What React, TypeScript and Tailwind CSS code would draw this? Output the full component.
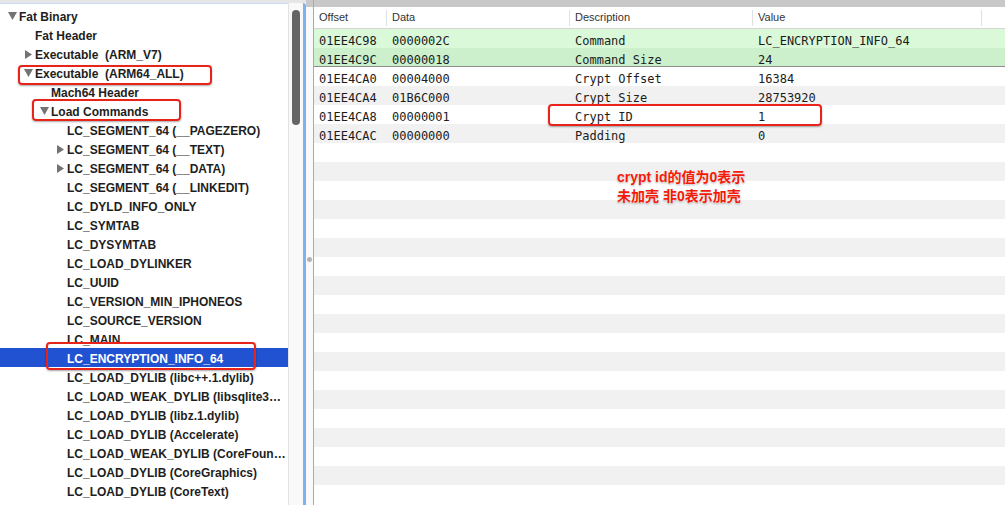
import React from "react";

type Node = { label: string; level: number; tri?: "open" | "closed"; selected?: boolean };

const tree: Node[] = [
  { label: "Fat Binary", level: 0, tri: "open" },
  { label: "Fat Header", level: 1 },
  { label: "Executable  (ARM_V7)", level: 1, tri: "closed" },
  { label: "Executable  (ARM64_ALL)", level: 1, tri: "open" },
  { label: "Mach64 Header", level: 2 },
  { label: "Load Commands", level: 2, tri: "open" },
  { label: "LC_SEGMENT_64 (__PAGEZERO)", level: 3 },
  { label: "LC_SEGMENT_64 (__TEXT)", level: 3, tri: "closed" },
  { label: "LC_SEGMENT_64 (__DATA)", level: 3, tri: "closed" },
  { label: "LC_SEGMENT_64 (__LINKEDIT)", level: 3 },
  { label: "LC_DYLD_INFO_ONLY", level: 3 },
  { label: "LC_SYMTAB", level: 3 },
  { label: "LC_DYSYMTAB", level: 3 },
  { label: "LC_LOAD_DYLINKER", level: 3 },
  { label: "LC_UUID", level: 3 },
  { label: "LC_VERSION_MIN_IPHONEOS", level: 3 },
  { label: "LC_SOURCE_VERSION", level: 3 },
  { label: "LC_MAIN", level: 3 },
  { label: "LC_ENCRYPTION_INFO_64", level: 3, selected: true },
  { label: "LC_LOAD_DYLIB (libc++.1.dylib)", level: 3 },
  { label: "LC_LOAD_WEAK_DYLIB (libsqlite3…", level: 3 },
  { label: "LC_LOAD_DYLIB (libz.1.dylib)", level: 3 },
  { label: "LC_LOAD_DYLIB (Accelerate)", level: 3 },
  { label: "LC_LOAD_WEAK_DYLIB (CoreFoun…", level: 3 },
  { label: "LC_LOAD_DYLIB (CoreGraphics)", level: 3 },
  { label: "LC_LOAD_DYLIB (CoreText)", level: 3 },
];

const rows = [
  ["01EE4C98", "0000002C", "Command", "LC_ENCRYPTION_INFO_64"],
  ["01EE4C9C", "00000018", "Command Size", "24"],
  ["01EE4CA0", "00004000", "Crypt Offset", "16384"],
  ["01EE4CA4", "01B6C000", "Crypt Size", "28753920"],
  ["01EE4CA8", "00000001", "Crypt ID", "1"],
  ["01EE4CAC", "00000000", "Padding", "0"],
];

const headers = ["Offset", "Data", "Description", "Value", ""];

const pad = ["pl-[5px]", "pl-[21px]", "pl-[37px]", "pl-[53px]"];

function Triangle({ kind }: { kind: "open" | "closed" }) {
  if (kind === "open")
    return (
      <svg width="9" height="8" viewBox="0 0 9 8">
        <polygon points="0,0 9,0 4.5,8" fill="#737373" />
      </svg>
    );
  return (
    <svg width="7" height="9" viewBox="0 0 7 9">
      <polygon points="0,0 7,4.5 0,9" fill="#737373" />
    </svg>
  );
}

function RedBox({ className }: { className: string }) {
  return (
    <div
      className={`absolute border-2 border-[#e8231a] rounded-[4px] shadow-[0_1px_2px_rgba(0,0,0,0.35)] ${className}`}
    />
  );
}

export default function App() {
  const stripes = Array.from({ length: 25 }, (_, i) => i);
  return (
    <div className="relative w-[1005px] h-[505px] overflow-hidden bg-white flex">
      {/* left outline */}
      <div className="w-[306px] flex flex-col">
        <div className="h-[3px] bg-[#e6e6e6]" />
        <div className="flex-1 flex min-h-0">
          <div className="w-[288px] pt-[2px] font-['Liberation_Sans',Arial,sans-serif] font-bold text-[12px] text-[#1e1e1e] border-t border-[#c9dcf5]">
            {tree.map((n, i) => (
              <div
                key={i}
                className={`h-[19px] flex items-center ${pad[n.level]} ${n.selected ? "bg-[#2152d2] text-white" : ""}`}
              >
                <div className="w-[14px] h-[19px] pt-[1px] flex items-center justify-center">
                  {n.tri && <Triangle kind={n.tri} />}
                </div>
                <span className="whitespace-pre leading-[19px] pt-[3px]">{n.label}</span>
              </div>
            ))}
          </div>
          <div className="w-[15px] bg-[#f9f9f9] border-l border-[#e2e2e2] pl-[3px] pt-[7px]">
            <div className="w-[8px] h-[115px] rounded-full bg-[#656565]" />
          </div>
          <div className="w-[3px] bg-[#80b1ef] rounded-tr-[3px]" />
        </div>
      </div>

      {/* split divider */}
      <div className="w-[7px] flex flex-col items-center bg-[#fafafa]">
        <div className="h-[7px] w-full bg-[#c8c8c8]" />
        <div className="mt-[250px] w-[5px] h-[5px] rounded-full bg-[#b4b4b4]" />
      </div>

      {/* right table */}
      <div className="flex-1 flex flex-col border-l border-[#a9a9a9]">
        <div className="h-[7px] bg-[#c8c8c8]" />
        <div className="h-[22px] grid grid-cols-[73px_183px_183px_229px_1fr] border-b border-[#d4d4d4] font-['Liberation_Sans',Arial,sans-serif] text-[11px] text-[#333]">
          {headers.map((h, i) => (
            <div key={i} className="flex items-center justify-between">
              <span className="pl-[5px]">{h}</span>
              {i < 4 && <div className="w-px h-[16px] bg-[#e0e0e0]" />}
            </div>
          ))}
        </div>
        <div className="font-['DejaVu_Sans_Mono',Menlo,monospace] text-[12px] text-[#1c1c1c]">
          {stripes.map((i) => {
            const r = rows[i];
            const bg =
              i === 0
                ? "bg-[#d9f9d9]"
                : i === 1
                ? "bg-[#ccf0cc] border-b border-[#8d8d8d]"
                : i % 2 === 1
                ? "bg-[#f1f1f1]"
                : "bg-white";
            return (
              <div key={i} className={`h-[19px] grid grid-cols-[73px_183px_183px_229px_1fr] ${bg}`}>
                {r &&
                  r.map((c, j) => (
                    <div key={j} className="pl-[5px] pt-[4px] leading-[17px] whitespace-pre">
                      {c}
                    </div>
                  ))}
              </div>
            );
          })}
        </div>
      </div>

      {/* annotations */}
      <RedBox className="left-[18px] top-[65px] w-[194px] h-[20px]" />
      <RedBox className="left-[32px] top-[99px] w-[149px] h-[22px]" />
      <RedBox className="left-[46px] top-[342px] w-[210px] h-[28px]" />
      <RedBox className="left-[548px] top-[104px] w-[274px] h-[22px]" />
      <div className="absolute left-[617px] top-[168px] font-['Liberation_Sans','Noto_Sans_CJK_SC',sans-serif] font-bold text-[14px] leading-[19px] text-[#f41a0a] [text-shadow:0_0_2px_#fff,0_0_2px_#fff,0_1px_2px_rgba(0,0,0,0.45)]">
        <div>crypt id的值为0表示</div>
        <div>未加壳 非0表示加壳</div>
      </div>
    </div>
  );
}
